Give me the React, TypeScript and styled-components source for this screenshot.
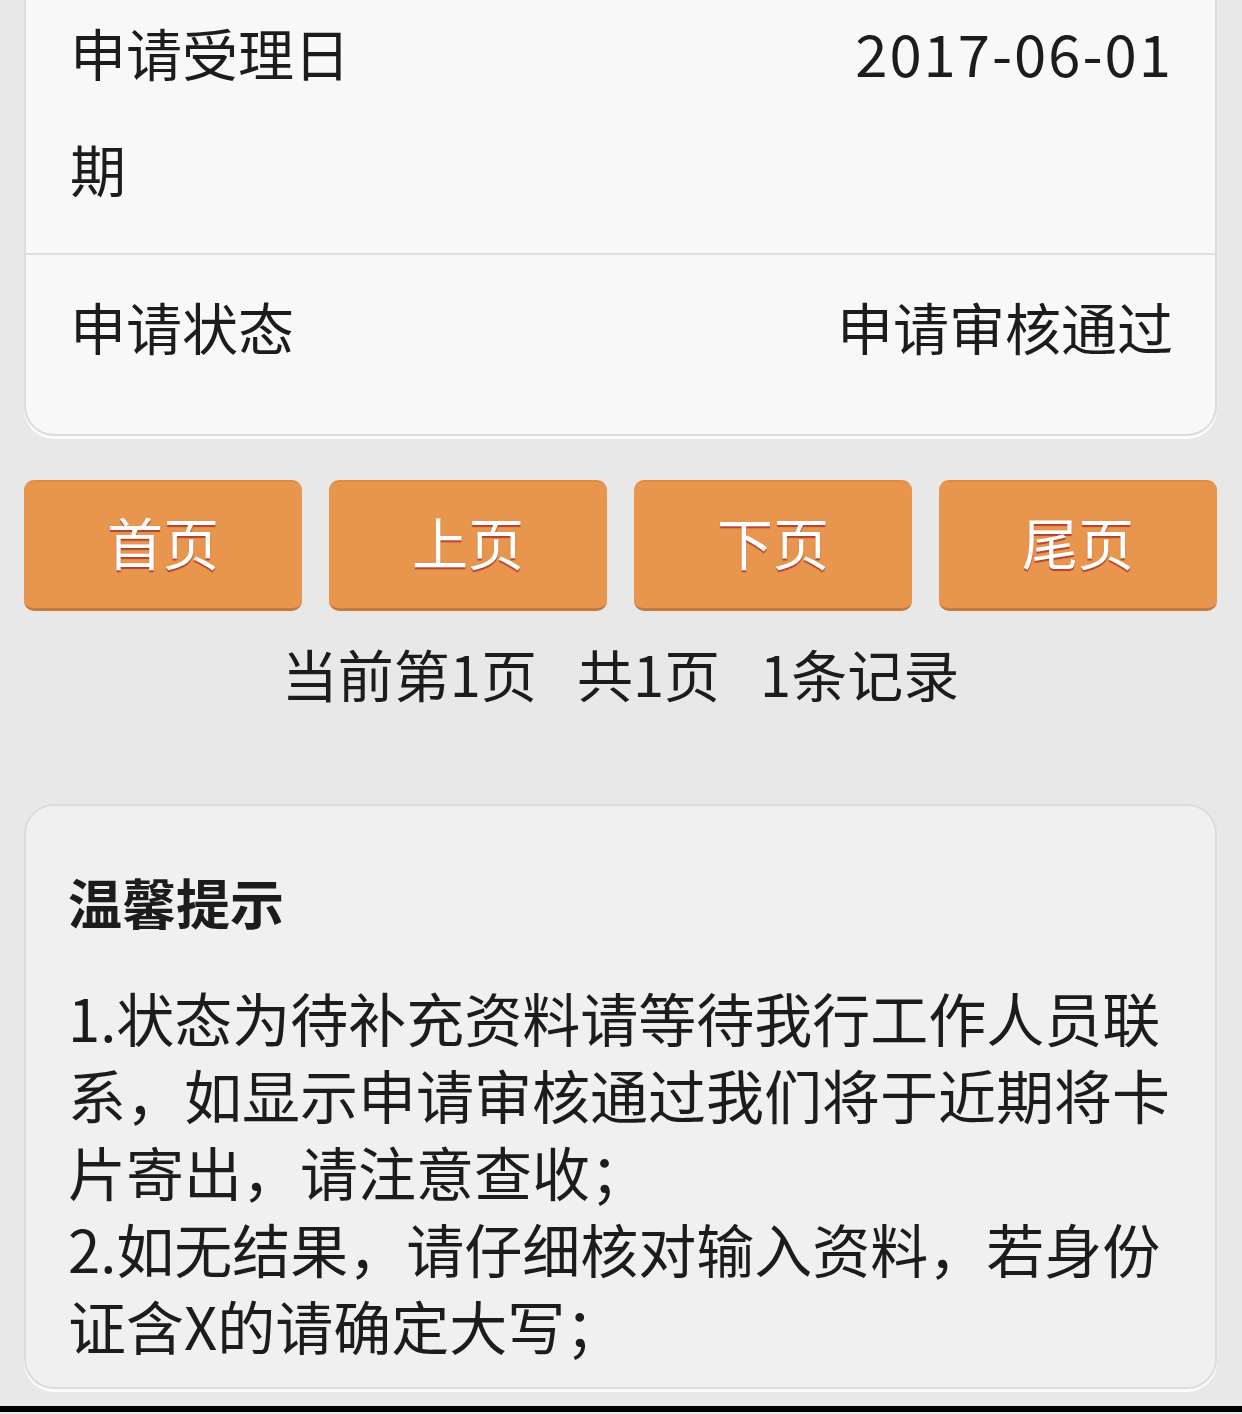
import styled, { createGlobalStyle } from "styled-components";

const GlobalStyle = createGlobalStyle`
  body {
    margin: 0;
    background: #e8e8e8;
    font-family: "Noto Sans CJK SC", "Noto Sans", sans-serif;
    color: #1c1c1c;
  }
`;

const Page = styled.div`
  padding: 0 25px 0 24px;
`;

// top of this card is scrolled out of view in the screenshot
const InfoCard = styled.div`
  margin-top: -6px;
  background: #f8f8f8;
  border: 2px solid #dcdcdc;
  border-top: none;
  border-radius: 0 0 30px 30px;
  box-shadow: 0 3px 0 rgba(255, 255, 255, 0.8);
`;

const InfoRow = styled.div<{ $first?: boolean }>`
  display: flex;
  justify-content: space-between;
  align-items: flex-start;
  font-size: 56px;
  line-height: 116px;
  padding: ${(p) => (p.$first ? "0 42px 27px 44px" : "13px 42px 50px 44px")};
  border-bottom: ${(p) => (p.$first ? "2px solid #dedede" : "none")};

  .label {
    max-width: 290px;
  }
  .value {
    flex-shrink: 0;
    text-align: right;
  }
  .date {
    font-size: 58px;
    letter-spacing: 2px;
  }
`;

const Pager = styled.div`
  display: grid;
  grid-template-columns: repeat(4, 1fr);
  column-gap: 27px;
  margin-top: 44px;
`;

const PagerButton = styled.button`
  height: 131px;
  border: none;
  border-top: 2px solid #e08a44;
  border-bottom: 3px solid #c57a3f;
  border-radius: 10px;
  background: #e8964e;
  color: #fff;
  font-family: "Noto Sans CJK SC", sans-serif;
  font-size: 56px;
  text-shadow: 0 2px 1px rgba(170, 50, 40, 0.85);
  padding: 0 0 10px;
  cursor: pointer;
`;

const PageInfo = styled.div`
  display: flex;
  justify-content: center;
  gap: 40px;
  margin-top: 22px;
  font-size: 56px;
  line-height: 80px;
`;

const TipCard = styled.div`
  margin-top: 91px;
  background: #f0f0f0;
  border: 2px solid #dcdcdc;
  border-radius: 30px;
  padding: 56px 28px 23px 42px;
  box-shadow: 0 3px 0 rgba(255, 255, 255, 0.8);

  .title {
    font-size: 54px;
    font-weight: bold;
    line-height: 80px;
  }
  .body {
    margin-top: 37px;
    font-size: 58px;
    line-height: 77px;
  }
`;

const BottomEdge = styled.div`
  margin-top: 17px;
  height: 6px;
  background: #000;
`;

const App = () => {
  const buttons = ["首页", "上页", "下页", "尾页"];

  return (
    <>
      <GlobalStyle />
      <Page>
        <InfoCard>
          <InfoRow $first>
            <div className="label">申请受理日期</div>
            <div className="value date">2017-06-01</div>
          </InfoRow>
          <InfoRow>
            <div className="label">申请状态</div>
            <div className="value">申请审核通过</div>
          </InfoRow>
        </InfoCard>

        <Pager>
          {buttons.map((b) => (
            <PagerButton key={b}>{b}</PagerButton>
          ))}
        </Pager>

        <PageInfo>
          <span>当前第1页</span>
          <span>共1页</span>
          <span>1条记录</span>
        </PageInfo>

        <TipCard>
          <div className="title">温馨提示</div>
          <div className="body">
            1.状态为待补充资料请等待我行工作人员联系，如显示申请审核通过我们将于近期将卡片寄出，请注意查收；
            <br />
            2.如无结果，请仔细核对输入资料，若身份证含X的请确定大写；
          </div>
        </TipCard>
      </Page>
      <BottomEdge />
    </>
  );
};

export default App;
